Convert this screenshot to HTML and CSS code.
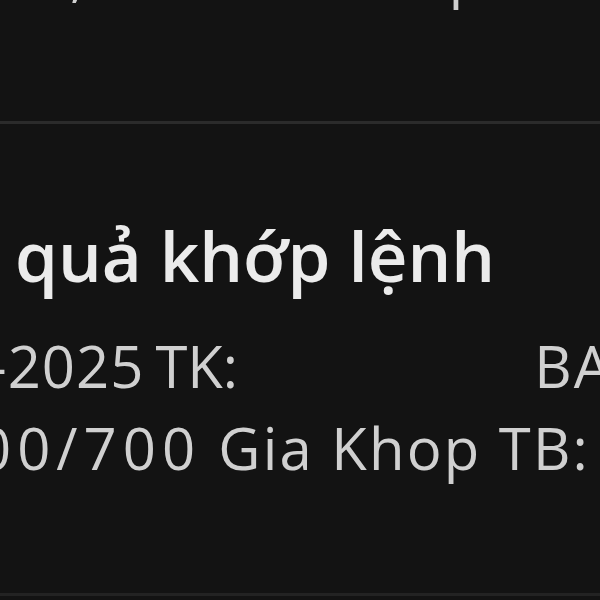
FILE: index.html
```html
<!DOCTYPE html>
<html lang="vi">
<head>
    <meta charset="UTF-8">
    <meta name="viewport" content="width=device-width, initial-scale=1.0">
    <title>Kết quả khớp lệnh</title>
    <link rel="stylesheet" href="styles.css">
</head>
<body>

    <div class="prev-section">
        <p class="prev-line"><span class="comma">,</span><span class="tail">p</span></p>
    </div>

    <div class="notice">
        <h2 class="notice-title">quả khớp lệnh</h2>
        <p class="notice-line">
            <span class="date"><span class="num">-2025</span> TK:</span>
            <span class="side">BAN</span>
        </p>
        <p class="notice-line">
            <span class="qty"><span class="num">00/700</span> Gia Khop TB:</span>
        </p>
    </div>

</body>
</html>
```

FILE: styles.css
```css
body {
    font-family: "Open Sans", "Noto Sans", sans-serif;
    margin: 0;
    padding: 0;
    background-color: #131313;
    color: #d0d0d0;
    overflow: hidden;
    height: 600px;
}
.prev-section {
    height: 121px;
    border-bottom: 3px solid #2b2b2b;
    overflow: hidden;
}
.prev-line {
    margin: -58px 0 0 0;
    font-size: 57px;
    line-height: 64px;
    white-space: nowrap;
    display: flex;
}
.prev-line .comma {
    margin-left: 70px;
}
.prev-line .tail {
    margin-left: 364px;
}
.notice {
    padding-top: 90px;
    height: 379px;
    border-bottom: 3px solid #232323;
    overflow: hidden;
}
.notice-title {
    margin: 0 0 28px 15px;
    font-size: 69px;
    font-weight: 600;
    line-height: 83px;
    color: #ebebeb;
    white-space: nowrap;
}
.notice-line {
    margin: 0;
    font-size: 58px;
    line-height: 82px;
    white-space: nowrap;
    display: flex;
    justify-content: space-between;
}
.notice-line .num {
    letter-spacing: 6px;
}
.notice-line .date {
    margin-left: -12px;
    word-spacing: -4px;
}
.notice-line .date .num {
    letter-spacing: 1px;
}
.notice-line .side {
    margin-right: -58px;
    letter-spacing: 2px;
}
.notice-line .qty {
    margin-left: -22px;
    letter-spacing: 2.2px;
}
```
